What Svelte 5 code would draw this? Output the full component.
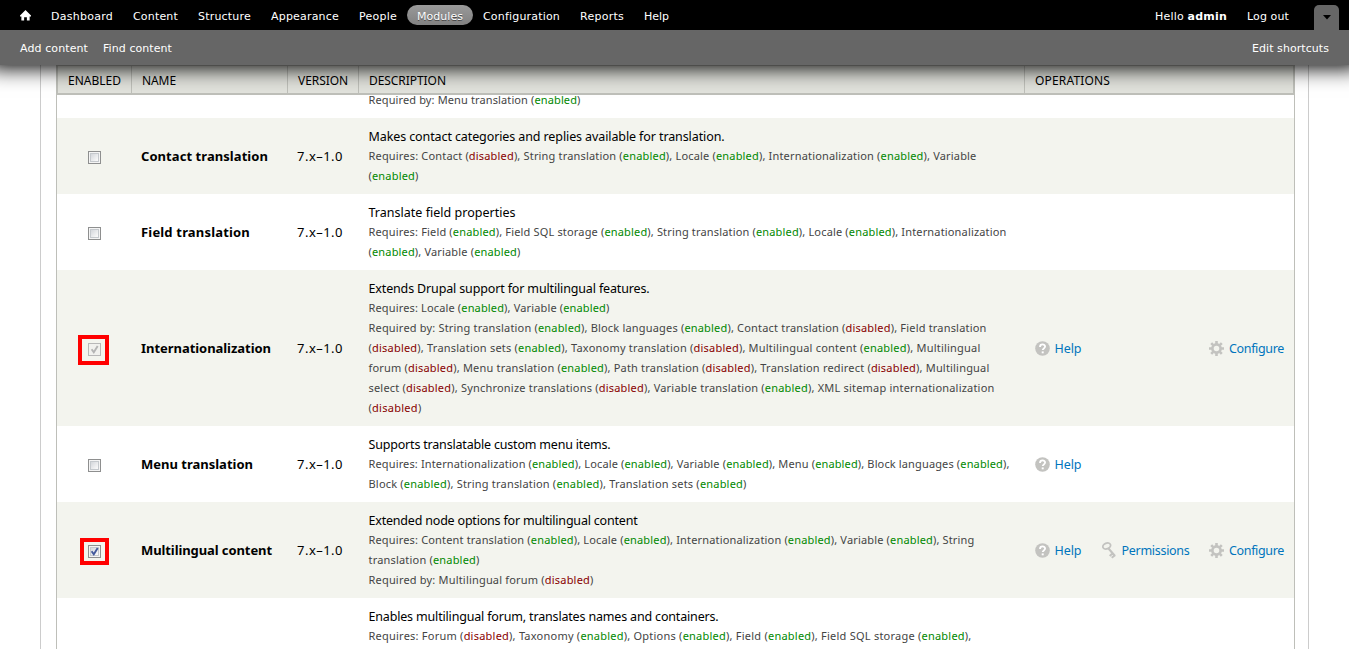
<script>
  const menu = [
    ['Dashboard', 62], ['Content', 45], ['Structure', 53],
    ['Appearance', 68], ['People', 38], ['Modules', 46],
    ['Configuration', 77], ['Reports', 44], ['Help', 25]
  ];

  const rows = [
    { h: 23, cut: true, lines: [['Required by: Menu translation (enabled)', 212]] },
    { h: 76, odd: true, name: 'Contact translation', nw: 127, lines: [
      ['Makes contact categories and replies available for translation.', 356],
      ['Requires: Contact (disabled), String translation (enabled), Locale (enabled), Internationalization (enabled), Variable', 608],
      ['(enabled)', 50]] },
    { h: 76, name: 'Field translation', nw: 109, lines: [
      ['Translate field properties', 147],
      ['Requires: Field (enabled), Field SQL storage (enabled), String translation (enabled), Locale (enabled), Internationalization', 638],
      ['(enabled), Variable (enabled)', 152]] },
    { h: 156, odd: true, name: 'Internationalization', nw: 130, check: 'locked', lines: [
      ['Extends Drupal support for multilingual features.', 281],
      ['Requires: Locale (enabled), Variable (enabled)', 241],
      ['Required by: String translation (enabled), Block languages (enabled), Contact translation (disabled), Field translation', 618],
      ['(disabled), Translation sets (enabled), Taxonomy translation (disabled), Multilingual content (enabled), Multilingual', 612],
      ['forum (disabled), Menu translation (enabled), Path translation (disabled), Translation redirect (disabled), Multilingual', 621],
      ['select (disabled), Synchronize translations (disabled), Variable translation (enabled), XML sitemap internationalization', 626],
      ['(disabled)', 53]], ops: ['help', 'configure'] },
    { h: 76, name: 'Menu translation', nw: 112, lines: [
      ['Supports translatable custom menu items.', 242],
      ['Requires: Internationalization (enabled), Locale (enabled), Variable (enabled), Menu (enabled), Block languages (enabled),', 641],
      ['Block (enabled), String translation (enabled), Translation sets (enabled)', 378]], ops: ['help'] },
    { h: 96, odd: true, name: 'Multilingual content', nw: 131, check: 'on', lines: [
      ['Extended node options for multilingual content', 269],
      ['Requires: Content translation (enabled), Locale (enabled), Internationalization (enabled), Variable (enabled), String', 606],
      ['translation (enabled)', 111],
      ['Required by: Multilingual forum (disabled)', 225]], ops: ['help', 'permissions', 'configure'] },
    { h: 76, lines: [
      ['Enables multilingual forum, translates names and containers.', 350],
      ['Requires: Forum (disabled), Taxonomy (enabled), Options (enabled), Field (enabled), Field SQL storage (enabled),', 603]] }
  ];

  const split = (text) => text.split(/(enabled|disabled)/);

  // Spreads the letters of a label so that it takes up the given width.
  function fit(node, width) {
    const apply = () => {
      node.style.letterSpacing = '0px';
      const natural = node.getBoundingClientRect().width;
      node.style.letterSpacing = (width - natural) / node.textContent.length + 'px';
    };
    apply();
    document.fonts.ready.then(apply);
  }
</script>

<div class="page">
  <header class="toolbar">
    <nav class="bar">
      <a class="home" href="#home" aria-label="Home">
        <svg width="11" height="11" viewBox="0 0 12 12"><path fill="#fff" d="M6 0 0 6v1h1.5v4.5h3V8h3v3.5h3V7H12V6z" /></svg>
      </a>
      <div class="links">
        {#each menu as [label, width]}
          <a href="#{label}" class:active={label === 'Modules'}><span use:fit={width}>{label}</span></a>
        {/each}
      </div>
      <div class="user">
        <span class="hello"><span use:fit={72}>Hello <b>admin</b></span></span>
        <a href="#logout"><span use:fit={42}>Log out</span></a>
        <button class="toggle" aria-label="Hide shortcuts"><svg width="8" height="5" viewBox="0 0 8 5"><path d="M0 0h8L4 4.5z" /></svg></button>
      </div>
    </nav>
    <nav class="shortcuts">
      <a href="#add"><span use:fit={68}>Add content</span></a>
      <a href="#find"><span use:fit={69}>Find content</span></a>
      <a class="edit" href="#edit"><span use:fit={77}>Edit shortcuts</span></a>
    </nav>
  </header>

  <main class="fieldset">
    <div class="table">
      <div class="row head">
        <div><span use:fit={53}>ENABLED</span></div>
        <div><span use:fit={34}>NAME</span></div>
        <div><span use:fit={50}>VERSION</span></div>
        <div><span use:fit={77}>DESCRIPTION</span></div>
        <div><span use:fit={75}>OPERATIONS</span></div>
      </div>
      {#each rows as row}
        <div class="row body" class:odd={row.odd} class:cut={row.cut} style:height="{row.h}px">
          <div class="check">
            {#if row.name}
              <span class="box {row.check ?? ''}">
                {#if row.check}
                  <svg width="13" height="13" viewBox="0 0 13 13"><path d="M3.6 6.2 5.8 9.3 9.7 3" fill="none" stroke={row.check === 'on' ? '#445a9c' : '#b4b4b4'} stroke-width="1.9" /></svg>
                  <i class="mark"></i>
                {/if}
              </span>
            {/if}
          </div>
          <div class="name">{#if row.name}<b use:fit={row.nw}>{row.name}</b>{/if}</div>
          <div class="version">{#if row.name}<span use:fit={46}>7.x–1.0</span>{/if}</div>
          <div class="description">
            {#each row.lines as [text, width], i}
              <div class:title={i === 0 && !row.cut} class="line"><span use:fit={width}>{#each split(text) as part}{#if part === 'enabled' || part === 'disabled'}<em class={part}>{part}</em>{:else}{part}{/if}{/each}</span></div>
            {/each}
          </div>
          <div class="operations">
            {#if row.ops}
              {#if row.ops.includes('help')}
                <a href="#help"><svg width="15" height="15" viewBox="0 0 15 15"><circle cx="7.5" cy="7.5" r="7.3" fill="#c3c3c0" /><path d="M5 5.9c0-3.3 5.1-3.1 5.1-.3 0 1.9-2.4 1.8-2.4 3.5" fill="none" stroke="#fff" stroke-width="1.8" /><path d="M6.7 10.4h2v1.9h-2z" fill="#fff" /></svg><span use:fit={27}>Help</span></a>
              {/if}
              {#if row.ops.includes('permissions')}
                <a class="permissions" href="#permissions"><svg width="15" height="17" viewBox="0 0 15 17"><g fill="none" stroke="#c3c3c0"><ellipse cx="4.7" cy="4" rx="4" ry="2.8" transform="rotate(-22 4.7 4)" stroke-width="1.8" /><path d="m6.5 6.5 6.5 7.5M10.7 11.3l-3 2.7M13 13.2l-3.3 2.6" stroke-width="2.1" /></g></svg><span use:fit={68}>Permissions</span></a>
              {/if}
              {#if row.ops.includes('configure')}
                <a class="configure" href="#configure"><svg width="15" height="15" viewBox="0 0 15 15"><g fill="none" stroke="#c3c3c0"><circle cx="7.5" cy="7.5" r="4.1" stroke-width="2.6" /><path stroke-width="2.6" d="M7.5 0v3M7.5 12v3M0 7.5h3M12 7.5h3M2.2 2.2l2 2M10.8 10.8l2 2M2.2 12.8l2-2M10.8 4.2l2-2" /></g></svg><span use:fit={55}>Configure</span></a>
              {/if}
            {/if}
          </div>
        </div>
      {/each}
    </div>
  </main>
</div>

<style>
  :global(body) { background: #fff; overflow: hidden; }
  .page { height: 649px; overflow: hidden; font-family: "Noto Sans", "Open Sans", sans-serif; font-size: 13px; color: #000; display: flex; flex-direction: column; }
  a { text-decoration: none; color: inherit; }
  span, b { white-space: nowrap; }
  .toolbar { position: relative; z-index: 2; flex: none; height: 65px; color: #fff; font-family: "DejaVu Sans", Verdana, sans-serif; font-size: 11px; line-height: 20px; }
  .toolbar::before { content: ""; position: absolute; z-index: -1; inset: 0 -12px; box-shadow: 0 3px 20px #000; }
  .bar { height: 30px; background: #000; display: flex; align-items: center; padding: 0 10px 0 20px; box-sizing: border-box; }
  .home { display: flex; width: 21px; }
  .links { display: flex; }
  .links a { padding: 0 10px; border-radius: 10px; height: 20px; line-height: 23px; }
  .links a.active { background: linear-gradient(#999, #818181); text-shadow: 0 1px 0 #444; }
  .user { margin-left: auto; display: flex; align-items: center; gap: 20px; height: 30px; padding-top: 3px; box-sizing: border-box; }
  .toggle { align-self: flex-end; width: 25px; height: 25px; margin-left: 5px; border: 0; padding: 0; border-radius: 5px 5px 0 0; background: #666; display: flex; align-items: center; justify-content: center; }
  .shortcuts { height: 35px; background: #666; display: flex; align-items: center; gap: 15px; padding: 3px 20px 0; box-sizing: border-box; }
  .edit { margin-left: auto; }
  .fieldset { flex: 1; margin: 0 40px; border: solid #ccc; border-width: 0 1px; padding: 0 13px 0 15px; min-height: 0; }
  .table { border: solid #bebfb9; border-width: 0 1px; height: 100%; }
  .row { display: grid; grid-template-columns: 74px 156px 71px 666px 1fr; }
  .row > div { min-width: 0; }
  .head { position: relative; z-index: 1; height: 30px; box-sizing: border-box; background: #e1e2dc; border: solid #bebfb9; border-width: 1px 1px 2px; font-size: 12px; line-height: 29px; grid-template-columns: 73px 156px 71px 666px 1fr; }
  .head > div { padding-left: 10px; }
  .head > div + div { border-left: 1px solid #bebfb9; }
  .odd { background: #f3f4ee; }
  .body > div { display: flex; align-items: center; }
  .body .check { justify-content: center; padding-top: 3px; }
  .box { position: relative; width: 13px; height: 13px; box-sizing: border-box; border: 1px solid #8e8f8f; background: linear-gradient(135deg, #c8ccd2, #f8f8f8 75%); box-shadow: inset 0 0 0 1px #f4f4f4, inset 0 0 0 2px #c5c9cd; }
  .box.locked { border-color: #b8b8b8; background: #f1f1ee; box-shadow: none; }
  .box svg { position: absolute; left: -1px; top: -1px; }
  .mark { position: absolute; border: 4px solid #f00; box-sizing: border-box; left: -11px; top: -9px; width: 31px; height: 30px; }
  .on .mark { left: -9px; top: -8px; width: 29px; height: 27px; }
  .name, .version { padding-left: 10px; }
  .body .description { display: block; padding: 8px 0 0 10.5px; font-size: 11px; line-height: 20px; color: #444; }
  .cut .description { padding-top: 0; margin-top: -5px; }
  .line { height: 20px; }
  .title { color: #000; font-size: 12.5px; line-height: 22px; }
  em { font-style: normal; }
  .enabled { color: #080; }
  .disabled { color: #800; }
  .body .operations { padding: 0 10px 0 10.5px; color: #0074bd; font-size: 12.5px; }
  .operations a { display: flex; align-items: center; gap: 5px; }
  .operations svg { flex: none; }
  .permissions { margin-left: 20px; }
  .configure { margin-left: auto; }
</style>
